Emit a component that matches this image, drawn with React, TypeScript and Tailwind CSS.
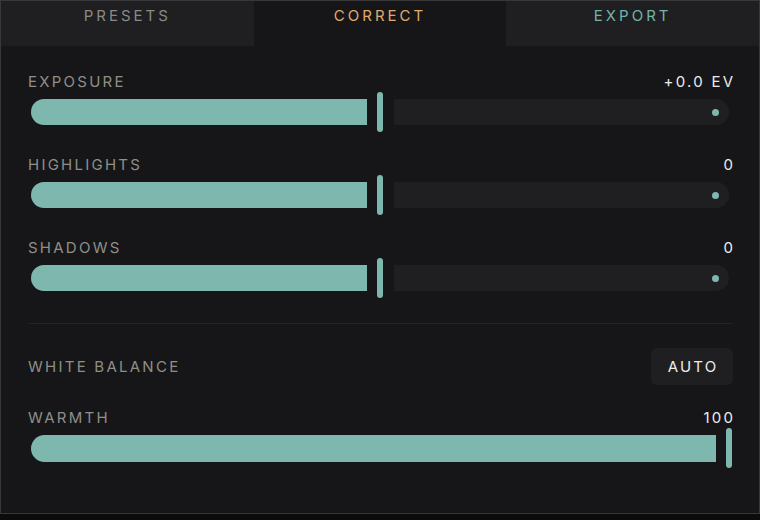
const font = { fontFamily: "Inter, 'Noto Sans', sans-serif" };

type Row = { label: string; value: string };

const rows: Row[] = [
    { label: "Exposure", value: "+0.0 EV" },
    { label: "Highlights", value: "0" },
    { label: "Shadows", value: "0" },
];

function SplitSlider() {
    return (
        <div className="flex items-center h-10 pl-[3px] pr-[4px]">
            <div className="w-[336px] shrink-0 h-[26px] bg-[#7eb7ae] rounded-l-full rounded-r-[3px]" />
            <div className="ml-[10px] mr-[11px] w-[6px] shrink-0 h-10 rounded-full bg-[#7eb7ae]" />
            <div className="flex-1 h-[26px] bg-[#1f1f21] rounded-r-full rounded-l-[3px] flex items-center justify-end pr-[10px]">
                <div className="w-[7px] h-[7px] rounded-full bg-[#7eb7ae]" />
            </div>
        </div>
    );
}

function App() {
    return (
        <div className="min-h-screen bg-[#0b0b0c]" style={font}>
            <div className="w-[760px] h-[514px] border border-[#38383a] bg-[#161618] flex flex-col">
                {/* tabs */}
                <div className="grid grid-cols-3 h-[45px] text-[15px] tracking-[0.2em]">
                    <div className="bg-[#1f1f21] text-[#8a8a86] text-center pt-[4px]">PRESETS</div>
                    <div className="bg-[#161618] text-[#e2ab6d] text-center pt-[4px]">CORRECT</div>
                    <div className="bg-[#1f1f21] text-[#72b4ab] text-center pt-[4px]">EXPORT</div>
                </div>

                <div className="pl-[27px] pr-[26px] pt-[26px] text-[15px] leading-5 tracking-[0.15em]">
                    {rows.map((r, i) => (
                        <div key={r.label} className={i > 0 ? "mt-[23px]" : ""}>
                            <div className="flex justify-between">
                                <span className="text-[#8f8f8a] uppercase">{r.label}</span>
                                <span className="text-[#ececec] -mr-[0.15em]">{r.value}</span>
                            </div>
                            <SplitSlider />
                        </div>
                    ))}

                    <div className="mt-[25px] h-px bg-[#232325]" />

                    <div className="mt-[24px] flex items-center justify-between">
                        <span className="text-[#8f8f8a]">WHITE BALANCE</span>
                        <button className="w-[82px] h-[37px] rounded-md bg-[#1f1f21] text-[#ececec] pl-[0.15em]">AUTO</button>
                    </div>

                    <div className="mt-[23px] flex justify-between">
                        <span className="text-[#8f8f8a]">WARMTH</span>
                        <span className="text-[#ececec] -mr-[0.15em]">100</span>
                    </div>
                    <div className="flex items-center h-10 pl-[3px] pr-px">
                        <div className="flex-1 h-[27px] bg-[#7eb7ae] rounded-l-full rounded-r-[3px]" />
                        <div className="ml-[10px] w-[6px] h-10 rounded-full bg-[#7eb7ae]" />
                    </div>
                </div>
            </div>
        </div>
    );
}

export default App;
